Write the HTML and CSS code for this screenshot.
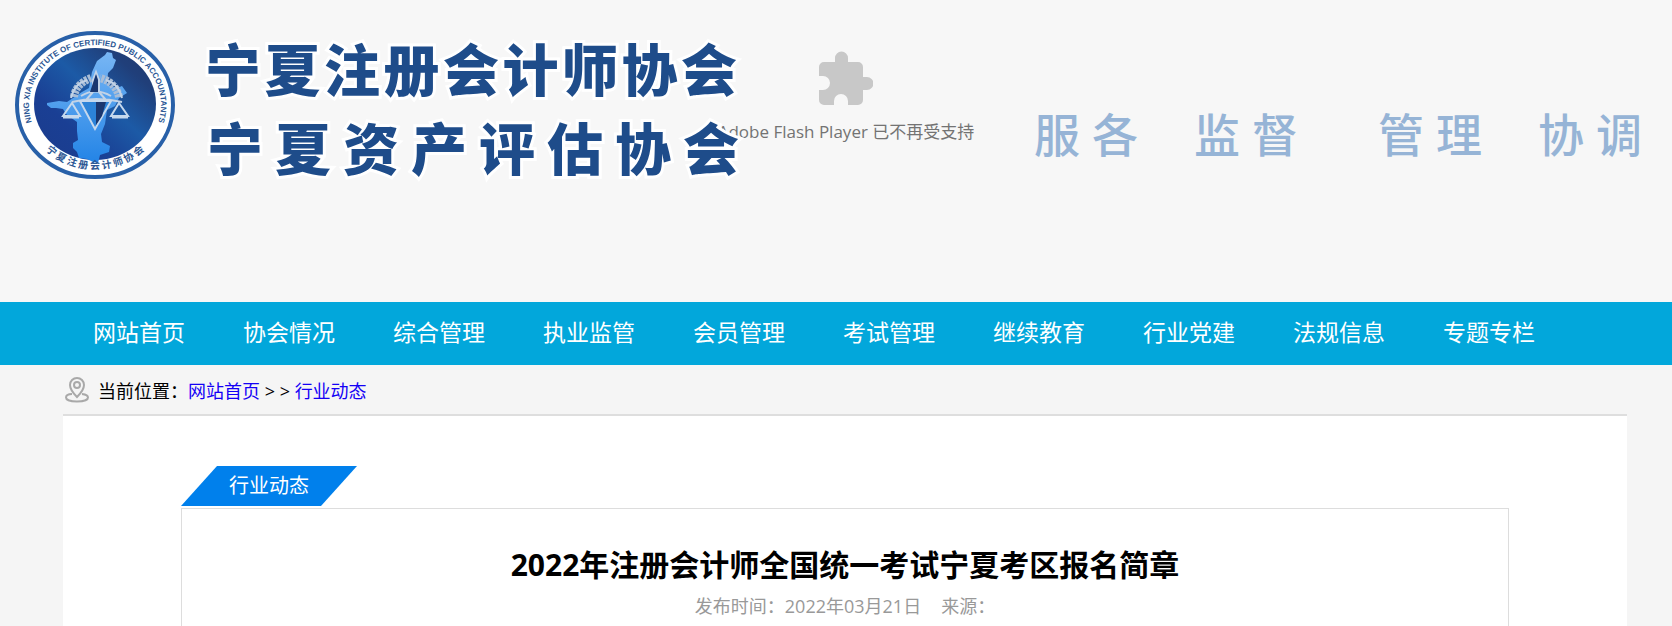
FILE: index.html
```html
<!DOCTYPE html>
<html lang="zh-CN">
<head>
<meta charset="utf-8">
<title>2022年注册会计师全国统一考试宁夏考区报名简章</title>
<link rel="stylesheet" href="styles.css">
</head>
<body>
<header class="banner">
  <div class="flash">
    <svg class="flash-icon" viewBox="0 0 54 54" aria-hidden="true">
      <path fill="#c8c8c8" d="M5 11H16V7a6.500 6.500 0 0 1 13 0v4h10a5 5 0 0 1 5 5v10h4a6.500 6.500 0 0 1 0 13h-4v10a5 5 0 0 1-5 5H29v-4a7 7 0 0 0-14 0v4H5a5 5 0 0 1-5-5V39h4a7 7 0 0 0 0-14H0V16a5 5 0 0 1 5-5Z"/>
    </svg>
    <p class="flash-text">Adobe Flash Player 已不再受支持</p>
  </div>
  <svg class="emblem" viewBox="0 0 162 150" role="img" aria-label="宁夏注册会计师协会">
    <defs>
      <linearGradient id="disc" x1="0" y1="1" x2="1" y2="0">
        <stop offset="0" stop-color="#1b3c8c"/><stop offset="0.3" stop-color="#1a3f94"/><stop offset="0.55" stop-color="#1c5aa6"/><stop offset="0.8" stop-color="#203f7a"/><stop offset="1" stop-color="#20386c"/>
      </linearGradient>
      <linearGradient id="land" x1="0" y1="0" x2="0" y2="1">
        <stop offset="0" stop-color="#78b6f4"/><stop offset="1" stop-color="#2384e6"/>
      </linearGradient>
      <path id="arc-top" d="M20 98A66 60 0 1 1 142 98"/>
      <path id="arc-bottom" d="M12 90A72 69 0 0 0 150 90"/>
    </defs>
    <ellipse cx="81" cy="75" rx="78" ry="72" fill="#fff" stroke="#2860a8" stroke-width="4"/>
    <ellipse cx="81" cy="74" rx="61" ry="56" fill="url(#disc)"/>
    <path fill="url(#land)" d="M83 31l8-6 2-3 5 1 1 5 3 2-3 8-5 5-1 10 1 2 9 3 5-2 5 7-8 5-4 8-8 4-2 14-4 10 1 8 8 4-1 6-9 3-2 8-5-1-6-3-8-1-2-6-4-4 0-5 5-3-1-9 0-9-11-8-3-5-7-1-5 0-4-3 0-2 12-2 8 1 15-10 7-4 3-16Z"/>
    <path fill="none" stroke="#a9bdd6" stroke-width="8" stroke-dasharray="3 1" d="M60 67C61 57 69 51 77 48M105 67C103 56 94 50 86 48"/>
    <path fill="none" stroke="#c3d3e6" stroke-width="2" d="M57 68q3-14 16-18M108 68q-3-14-16-18M67 66q14-9 30 0M58 72q24-6 50 0M79 50l3-8 3 8v12l7 8H72l7-8Z"/>
    <path fill="#1b376f" d="M80 50l2-6 2 6v12l-8 0Z"/>
    <path fill="#2c83d8" stroke="#c5d8ed" stroke-width="2" d="M66 71h31L81 99Z"/>
    <path fill="#1b376f" d="M82 72h10l-4 14-6 9Z"/>
    <g fill="none" stroke="#c5d8ed" stroke-width="2"><path d="M58 73l-9 13h17ZM105 73l-8 13h17Z"/><path stroke-width="3" d="M49 87h16M98 87h16"/></g>
    <text class="emblem-latin"><textPath href="#arc-top" startOffset="50%">NING XIA INSTITUTE OF CERTIFIED PUBLIC ACCOUNTANTS</textPath></text>
    <text class="emblem-han"><textPath href="#arc-bottom" startOffset="50%">宁 夏 注 册 会 计 师 协 会</textPath></text>
  </svg>
  <h1 class="names">
    <span class="name">宁夏注册会计师协会</span>
    <span class="name name-second">宁夏资产评估协会</span>
  </h1>
  <div class="slogan">
    <span>服各</span><span>监督</span><span class="slogan-apart">管理</span><span>协调</span>
  </div>
</header>
<nav class="menu">
  <a href="#">网站首页</a><a href="#">协会情况</a><a href="#">综合管理</a><a href="#">执业监管</a><a href="#">会员管理</a><a href="#">考试管理</a><a href="#">继续教育</a><a href="#">行业党建</a><a href="#">法规信息</a><a href="#">专题专栏</a>
</nav>
<main class="page">
  <div class="crumbs">
    <svg class="pin" viewBox="0 0 24 26" fill="none" stroke="#a9a9a9" stroke-width="2" aria-hidden="true">
      <path d="M12 20C8 16 5 12 5 8a7 7 0 0 1 14 0c0 4-3 8-7 12Z"/><circle cx="12" cy="8" r="3"/>
      <path d="M7 17C3 17 1 18.500 1 20.500c0 2.500 5 4 11 4s11-1.500 11-4c0-2-2-3-6-3.500"/>
    </svg>
    <span>当前位置：<a href="#">网站首页</a> &gt; &gt; <a href="#">行业动态</a></span>
  </div>
  <div class="content">
    <div class="tab">行业动态</div>
    <article class="article">
      <h2 class="title">2022年注册会计师全国统一考试宁夏考区报名简章</h2>
      <p class="meta"><span>发布时间：2022年03月21日</span><span>来源：</span></p>
    </article>
  </div>
</main>
</body>
</html>
```
FILE: styles.css
```css
* { box-sizing: border-box; }
body {
  display: flex;
  flex-direction: column;
  min-height: 100vh;
  margin: 0;
  background: #f5f5f5;
  color: #000;
  font-family: "Open Sans", "Noto Sans CJK SC", sans-serif;
  font-size: 18px;
}
h1, h2, p { margin: 0; }
a { text-decoration: none; }

.banner {
  position: relative;
  display: flex;
  align-items: flex-start;
  height: 302px;
  padding: 30px 30px 0 14px;
  background: #f7f7f7;
}
.emblem { position: relative; flex: none; width: 162px; height: 150px; }
.emblem-latin {
  font: bold 8px "Liberation Sans", sans-serif;
  fill: #2c5794;
  text-anchor: middle;
}
.emblem-han {
  font: bold 10px "Noto Sans CJK SC", sans-serif;
  fill: #2c5794;
  text-anchor: middle;
}
.names {
  position: relative;
  flex: none;
  width: 532px;
  margin-left: 29px;
  color: #1e4c8a;
  font-size: 56px;
  font-weight: 900;
  line-height: 79px;
  -webkit-text-stroke: 6px #fff;
  paint-order: stroke fill;
}
.name { display: block; text-align-last: justify; }
.name-second { margin-left: 2px; margin-right: -2px; }
.flash {
  position: absolute;
  top: 51px;
  left: 0;
  right: 0;
  padding-left: 20px;
  display: flex;
  flex-direction: column;
  align-items: center;
  gap: 15px;
}
.flash-icon { width: 54px; height: 54px; }
.flash-text { color: #737373; font-size: 17px; line-height: 24px; }
.slogan {
  display: flex;
  gap: 56px;
  margin-left: auto;
  padding-top: 72px;
  color: #96b4d6;
  font-size: 46px;
  font-weight: 500;
  line-height: 64px;
}
.slogan span { width: 104px; text-align-last: justify; }
.slogan .slogan-apart { margin-left: 24px; }

.menu {
  display: flex;
  height: 63px;
  padding-left: 64px;
  background: #02a7db;
}
.menu a {
  width: 150px;
  color: #fff;
  font-size: 23px;
  line-height: 60px;
  text-align: center;
}

.page {
  display: flex;
  flex: 1;
  flex-direction: column;
  margin: 0 45px 0 63px;
}
.crumbs {
  display: flex;
  align-items: center;
  gap: 9px;
  height: 49px;
  padding-left: 2px;
}
.crumbs a { color: #1400f5; }
.pin { width: 24px; height: 26px; }
.content {
  display: flex;
  flex: 1;
  flex-direction: column;
  border-top: 2px solid #dedede;
  padding: 50px 118px 0;
  background: #fff;
}
.tab {
  width: 176px;
  height: 40px;
  margin-bottom: 2px;
  background: #0080ec;
  clip-path: polygon(36px 0, 100% 0, 140px 100%, 0 100%);
  color: #fff;
  font-size: 20px;
  line-height: 40px;
  text-align: center;
}
.article {
  flex: 1;
  padding-top: 35px;
  border: 1px solid #ddd;
  border-bottom: 0;
  text-align: center;
}
.title { font-size: 30px; line-height: 42px; }
.meta {
  display: flex;
  justify-content: center;
  gap: 20px;
  color: #999;
  line-height: 40px;
}
```
